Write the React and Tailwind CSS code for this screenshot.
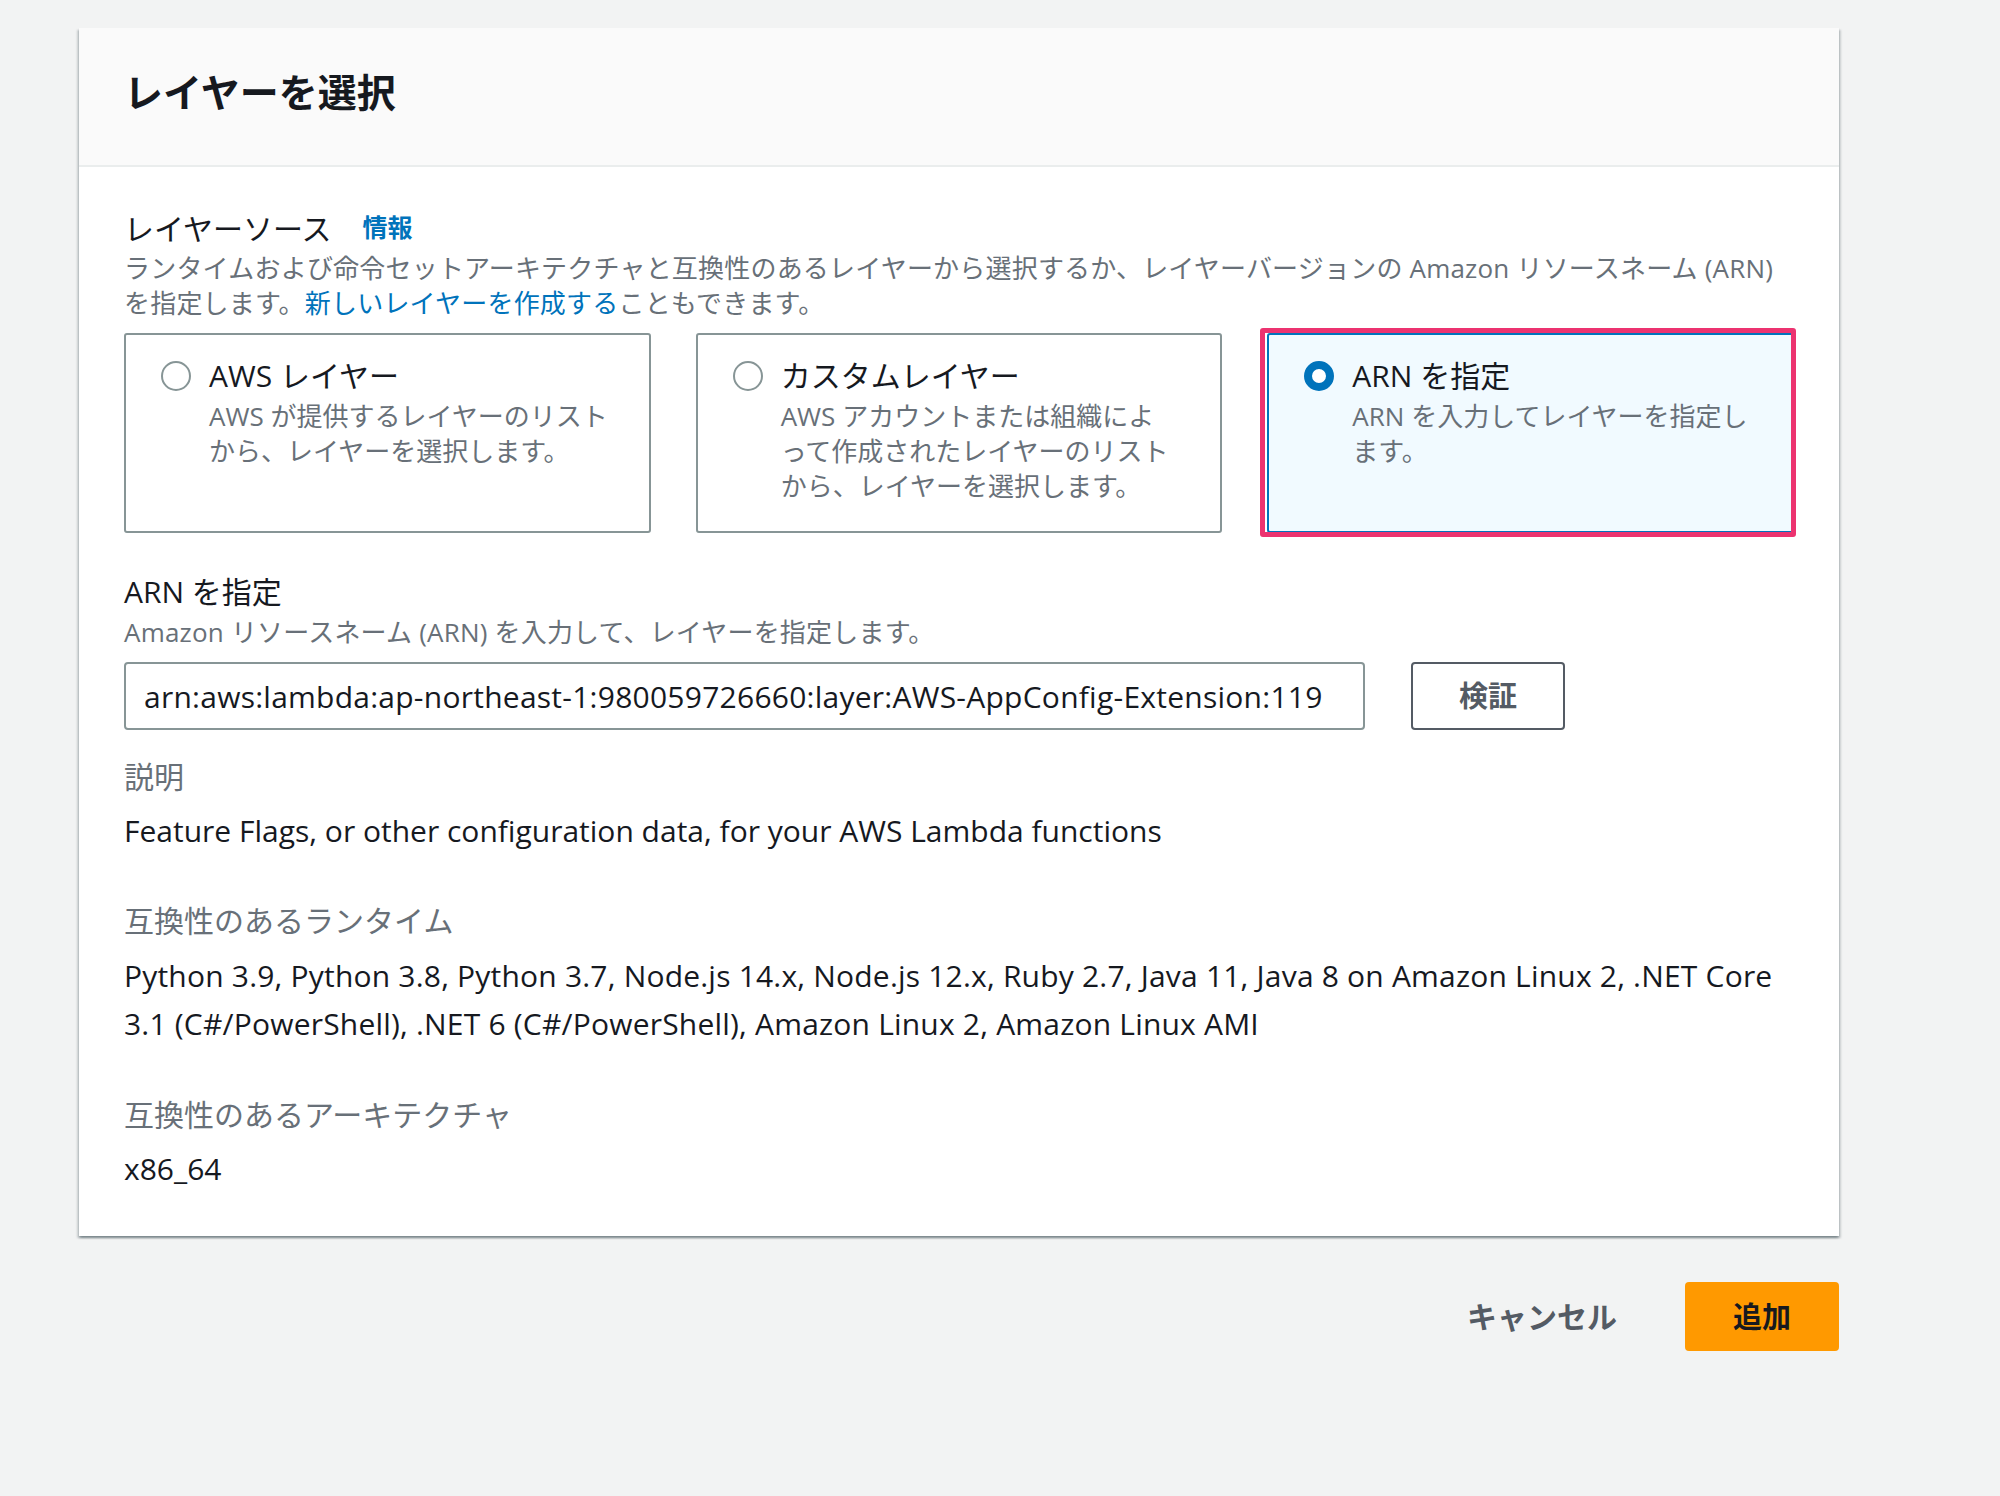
import { useState } from "react"

const font = { fontFamily: '"Open Sans", "Noto Sans CJK JP", sans-serif' }

const sources = [
  {
    id: "aws",
    title: "AWS レイヤー",
    lines: ["AWS が提供するレイヤーのリスト", "から、レイヤーを選択します。"],
  },
  {
    id: "custom",
    title: "カスタムレイヤー",
    lines: ["AWS アカウントまたは組織によ", "って作成されたレイヤーのリスト", "から、レイヤーを選択します。"],
  },
  {
    id: "arn",
    title: "ARN を指定",
    lines: ["ARN を入力してレイヤーを指定し", "ます。"],
  },
]

const SourceCard = ({ item, selected, onSelect }) => (
  <div className="relative w-[527px] h-[200px]">
    <button
      type="button"
      onClick={() => onSelect(item.id)}
      className={`w-full h-full text-left flex gap-[18px] px-[35px] pt-[21px] rounded-[3px] border-2 ${
        selected ? "border-[#0073bb] bg-[#f1faff]" : "border-[#879596] bg-white"
      }`}
    >
      <span
        className={`mt-[5px] shrink-0 w-[30px] h-[30px] rounded-full bg-white ${
          selected ? "border-[8px] border-[#0073bb]" : "border-2 border-[#879596]"
        }`}
      />
      <span className="flex flex-col">
        <span className="text-[30px] leading-[40px] text-[#16191f]">{item.title}</span>
        <span className="mt-[3px] text-[26px] leading-[35px] text-[#687078]">
          {item.lines.map((l, i) => (
            <span key={i} className="block whitespace-nowrap">{l}</span>
          ))}
        </span>
      </span>
    </button>
    {selected && (
      // 注釈の枠
      <div className="pointer-events-none absolute -left-[7px] -top-[5px] -right-[2px] -bottom-[4px] border-[5px] border-[#ec3370] rounded-[3px]" />
    )}
  </div>
)

const App = () => {
  const [source, setSource] = useState("arn")
  const [arn, setArn] = useState("arn:aws:lambda:ap-northeast-1:980059726660:layer:AWS-AppConfig-Extension:119")

  return (
    <div className="min-h-screen bg-[#f2f3f3] pt-[28px] pl-[79px]" style={font}>
      <div className="w-[1760px] bg-white shadow-[0_2px_2px_0_rgba(0,28,36,0.3),2px_2px_2px_0_rgba(0,28,36,0.15),-2px_2px_2px_0_rgba(0,28,36,0.15)]">
        <div className="h-[139px] bg-[#fafafa] border-b-2 border-[#eaeded] flex items-center px-[45px] pb-[8px]">
          <h2 className="text-[39px] font-bold text-[#16191f]">レイヤーを選択</h2>
        </div>

        <div className="px-[45px] pt-[41px] pb-[43px]">
          <div className="flex items-center gap-[31px] h-[40px]">
            <span className="text-[30px] text-[#16191f]">レイヤーソース</span>
            <a href="#" className="text-[25px] font-bold text-[#0073bb]">情報</a>
          </div>
          <p className="mt-[3px] text-[26px] leading-[35px] tracking-[0.2px] text-[#687078]">
            ランタイムおよび命令セットアーキテクチャと互換性のあるレイヤーから選択するか、レイヤーバージョンの Amazon リソースネーム (ARN)
            <br />
            を指定します。<a href="#" className="text-[#0073bb]">新しいレイヤーを作成する</a>こともできます。
          </p>

          <div className="mt-[12px] flex gap-[45px]">
            {sources.map((s) => (
              <SourceCard key={s.id} item={s} selected={source === s.id} onSelect={setSource} />
            ))}
          </div>

          <div className="mt-[39px] text-[30px] leading-[40px] text-[#16191f]">ARN を指定</div>
          <div className="mt-[3px] text-[26px] leading-[35px] tracking-[0.2px] text-[#687078]">
            Amazon リソースネーム (ARN) を入力して、レイヤーを指定します。
          </div>
          <div className="mt-[12px] flex gap-[46px]">
            <input
              value={arn}
              onChange={(e) => setArn(e.target.value)}
              className="w-[1241px] h-[68px] px-[18px] border-2 border-[#879596] rounded-[4px] text-[30px] tracking-[0.25px] text-[#16191f] outline-none"
            />
            <button className="w-[154px] h-[68px] border-2 border-[#545b64] rounded-[4px] text-[29px] font-bold text-[#545b64]">
              検証
            </button>
          </div>

          <div className="mt-[27px] text-[30px] leading-[40px] text-[#687078]">説明</div>
          <div className="mt-[10px] text-[30px] leading-[48px] text-[#16191f]">
            Feature Flags, or other configuration data, for your AWS Lambda functions
          </div>

          <div className="mt-[46px] text-[30px] leading-[40px] text-[#687078]">互換性のあるランタイム</div>
          <div className="mt-[11px] text-[30px] leading-[48px] tracking-[0.2px] text-[#16191f]">
            Python 3.9, Python 3.8, Python 3.7, Node.js 14.x, Node.js 12.x, Ruby 2.7, Java 11, Java 8 on Amazon Linux 2, .NET Core
            <br />
            3.1 (C#/PowerShell), .NET 6 (C#/PowerShell), Amazon Linux 2, Amazon Linux AMI
          </div>

          <div className="mt-[47px] text-[30px] leading-[40px] text-[#687078]">互換性のあるアーキテクチャ</div>
          <div className="mt-[10px] text-[30px] leading-[48px] text-[#16191f]">x86_64</div>
        </div>
      </div>

      <div className="w-[1760px] mt-[46px] flex justify-end items-center gap-[44px]">
        <button className="px-[24px] h-[69px] text-[30px] font-bold text-[#545b64]">キャンセル</button>
        <button className="w-[154px] h-[69px] rounded-[4px] bg-[#ff9900] text-[29px] font-bold text-[#16191f]">
          追加
        </button>
      </div>
    </div>
  )
}

export default App
